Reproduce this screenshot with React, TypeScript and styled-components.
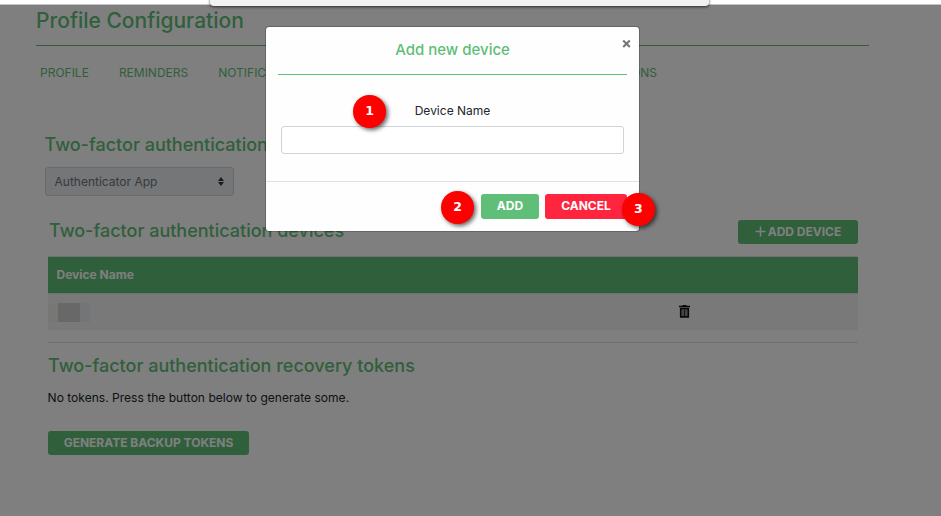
import React from "react";
import styled, { createGlobalStyle } from "styled-components";

const GREEN = "#5fbe77";

const GlobalStyle = createGlobalStyle`
  * { box-sizing: border-box; }
  body { margin: 0; background: #fff; overflow: hidden; }
  #root { font-family: Inter, "Liberation Sans", sans-serif; font-size: 12px; color: #212529; }
`;

const Screen = styled.div`
  position: relative;
  width: 941px;
  height: 516px;
  overflow: hidden;
`;

const TopStrip = styled.div`
  height: 5px;
  background: #fff;
  border-bottom: 1px solid #c4c4c4;
`;

const Page = styled.main`
  height: 511px;
  padding-left: 36px;
  background: #fff;
`;

const PageTitle = styled.h1`
  width: 833px;
  height: 41px;
  margin: 0;
  border-bottom: 1px solid #66bb7c;
  color: ${GREEN};
  font-size: 21px;
  font-weight: 500;
  line-height: 31px;
`;

const Tabs = styled.nav`
  display: flex;
  justify-content: space-between;
  width: 617px;
  margin: 15px 0 0 4px;
  color: ${GREEN};
  font-size: 12px;
  line-height: 23px;
`;

const TabGroup = styled.div`
  display: flex;
  gap: 30px;
`;

const Section = styled.section<{ $top: number; $left: number }>`
  width: 810px;
  margin: ${(p) => p.$top}px 0 0 ${(p) => p.$left}px;
`;

const Heading = styled.h2`
  margin: 0;
  color: ${GREEN};
  font-size: 18px;
  font-weight: 500;
  line-height: 24px;
`;

const Select = styled.div`
  display: flex;
  align-items: center;
  justify-content: space-between;
  width: 189px;
  height: 29px;
  margin-top: 10px;
  padding: 0 9px;
  border: 1px solid #ced4da;
  border-radius: 3px;
  background: #e9ecef;
  color: #6c757d;
`;

const SectionBar = styled.div`
  display: flex;
  align-items: center;
  justify-content: space-between;
  height: 24px;
  padding-left: 1px;

  ${Heading} { line-height: 22px; padding-bottom: 2px; }
`;

const Button = styled.button<{ $width: number; $height?: number; $color?: string }>`
  display: flex;
  align-items: center;
  justify-content: center;
  gap: 2px;
  width: ${(p) => p.$width}px;
  height: ${(p) => p.$height ?? 24}px;
  padding: 0 0 1px;
  border: 0;
  border-radius: 3px;
  background: ${(p) => p.$color ?? GREEN};
  color: #fff;
  font: 700 12px/20px Inter, sans-serif;
  white-space: nowrap;
`;

const Table = styled.div`
  margin-top: 12px;
  border-top: 1px solid #dee2e6;
`;

const TableHead = styled.div`
  height: 37px;
  padding-left: 8.5px;
  border-bottom: 1px solid #dee2e6;
  background: ${GREEN};
  background-clip: padding-box;
  color: #fff;
  font-weight: 700;
  line-height: 35px;
`;

const TableRow = styled.div`
  display: flex;
  align-items: center;
  justify-content: space-between;
  height: 36px;
  padding-right: 168px;
  background: #f2f2f2;

  svg { margin-bottom: 1px; }
`;

const Redacted = styled.div`
  width: 42px;
  height: 19px;
  background: linear-gradient(90deg, #eeeeec 0 10.4px, #d0d0d0 10.4px 32px, #e9ebee 32px);
`;

const Rule = styled.div`
  height: 1px;
  margin-top: 12px;
  background: #dedede;
`;

const Message = styled.p`
  margin: 9px 0 22px -0.4px;
  font-size: 12.05px;
  line-height: 22px;
`;

const Backdrop = styled.div`
  position: absolute;
  inset: 5px 0 0;
  background: rgba(0, 0, 0, 0.5);
`;

const Toolbar = styled.div`
  position: absolute;
  top: -8px;
  left: 210px;
  width: 499px;
  height: 14px;
  border-radius: 0 0 4px 4px;
  background: #f2f2f2;
  box-shadow: 0 1px 3px rgba(0, 0, 0, 0.65);
`;

const Dialog = styled.div`
  position: absolute;
  top: 26px;
  left: 265px;
  width: 375px;
  height: 206px;
  border: 1px solid rgba(0, 0, 0, 0.2);
  border-radius: 4px;
  background: #fefefe;
  background-clip: padding-box;
`;

const DialogHeader = styled.header`
  height: 48px;
  margin: 0 12px;
  border-bottom: 1px solid ${GREEN};
  color: ${GREEN};
  font-size: 15px;
  font-weight: 500;
  line-height: 46px;
  text-align: center;
`;

const Close = styled.div`
  position: absolute;
  top: 12px;
  right: 8px;
  width: 9px;
  height: 9px;
  svg { display: block; }
`;

const DialogBody = styled.div`
  height: 106px;
  padding: 25px 15px 0;
  text-align: center;
`;

const Label = styled.label`
  display: block;
  height: 26px;
  line-height: 21px;
`;

const Input = styled.input`
  display: block;
  width: 343px;
  height: 28px;
  border: 1px solid #ced4da;
  border-radius: 3px;
  background: #fff;
`;

const DialogFooter = styled.footer`
  display: flex;
  justify-content: flex-end;
  gap: 6px;
  padding: 12px 12px 0 0;
  border-top: 1px solid #dee2e6;
`;

const Marker = styled.div<{ $x: number; $y: number }>`
  position: absolute;
  left: ${(p) => p.$x}px;
  top: ${(p) => p.$y}px;
  width: 32.5px;
  height: 32.5px;
  border-radius: 50%;
  background: #fe0000;
  box-shadow: 2px 2px 4px rgba(0, 0, 0, 0.6);
  color: #fff;
  font: bold 12.5px/32px "DejaVu Sans", sans-serif;
  text-align: center;
`;

const SortIcon = () => (
  <svg width="6" height="9" viewBox="0 0 6 9" fill="#343a40">
    <path d="M3 0 6 3.9H0zM3 9 0 5.1h6z" />
  </svg>
);

const PlusIcon = () => (
  <svg width="11" height="11" viewBox="0 0 11 11" stroke="#fff" strokeWidth="1.5">
    <path d="M5.5.5v10M.5 5.5h10" />
  </svg>
);

const TrashIcon = () => (
  <svg width="11" height="13" viewBox="0 0 11 13" fill="none" stroke="#111">
    <path d="M0 1.6h11M3.5.6h4" strokeWidth="1.5" />
    <path d="M1.8 3.6h7.4v8.2H1.8z" strokeWidth="1.8" />
    <path d="M4 4.5v6.5M5.5 4.5v6.5M7 4.5v6.5" strokeWidth=".9" />
  </svg>
);

export default function App() {
  return (
    <>
      <GlobalStyle />
      <Screen>
        <TopStrip />
        <Page>
          <PageTitle>Profile Configuration</PageTitle>
          <Tabs>
            <TabGroup>
              <span>PROFILE</span>
              <span>REMINDERS</span>
              <span>NOTIFICATIONS</span>
            </TabGroup>
            <span>INTEGRATIONS</span>
          </Tabs>
          <Section $top={49} $left={8.5}>
            <Heading>Two-factor authentication</Heading>
            <Select>
              Authenticator App
              <SortIcon />
            </Select>
          </Section>
          <Section $top={24} $left={12}>
            <SectionBar>
              <Heading>Two-factor authentication devices</Heading>
              <Button $width={120}>
                <PlusIcon />
                ADD DEVICE
              </Button>
            </SectionBar>
            <Table>
              <TableHead>Device Name</TableHead>
              <TableRow>
                <Redacted />
                <TrashIcon />
              </TableRow>
            </Table>
            <Rule />
          </Section>
          <Section $top={11} $left={12}>
            <Heading>Two-factor authentication recovery tokens</Heading>
            <Message>No tokens. Press the button below to generate some.</Message>
            <Button $width={201}>GENERATE BACKUP TOKENS</Button>
          </Section>
        </Page>
        <Backdrop />
        <Toolbar />
        <Dialog role="dialog">
          <DialogHeader>Add new device</DialogHeader>
          <Close>
            <svg width="9" height="9" viewBox="0 0 9 9" stroke="#777" strokeWidth="2.1">
              <path d="M1.2 1.5l6.6 6.4M7.8 1.5L1.2 7.9" />
            </svg>
          </Close>
          <DialogBody>
            <Label htmlFor="device-name">Device Name</Label>
            <Input id="device-name" />
          </DialogBody>
          <DialogFooter>
            <Button $width={58} $height={25}>ADD</Button>
            <Button $width={82} $height={25} $color="#ff253f">CANCEL</Button>
          </DialogFooter>
        </Dialog>
        <Marker $x={353.3} $y={95.3}>1</Marker>
        <Marker $x={441.3} $y={191.3}>2</Marker>
        <Marker $x={622.2} $y={193.3}>3</Marker>
      </Screen>
    </>
  );
}
